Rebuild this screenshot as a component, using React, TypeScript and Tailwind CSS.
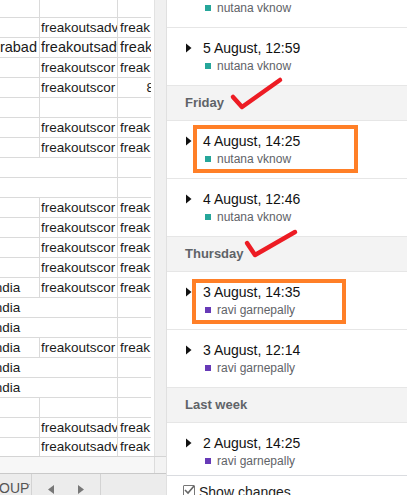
import React from "react";

type SheetRow = {
  a?: string;
  aRight?: boolean;
  b?: string;
  c?: string;
  cRight?: boolean;
  noA?: boolean;
  big?: boolean;
};

const sheetRows: SheetRow[] = [
  {},
  { b: "freakoutsadv", c: "freak" },
  { a: "Hyderabad", aRight: true, b: "freakoutsadv", c: "freak", big: true },
  { b: "freakoutscor", c: "freak" },
  { b: "freakoutscor", c: "8", cRight: true },
  {},
  { b: "freakoutscor", c: "freak" },
  { b: "freakoutscor", c: "freak" },
  { noA: true },
  { noA: true },
  { b: "freakoutscor", c: "freak" },
  { b: "freakoutscor", c: "freak" },
  { b: "freakoutscor", c: "freak" },
  { b: "freakoutscor", c: "freak" },
  { a: "India", b: "freakoutscor", c: "freak" },
  { a: "India", noA: true },
  { a: "India", noA: true },
  { a: "India", b: "freakoutscor", c: "freak" },
  { a: "India", noA: true },
  { a: "India", noA: true },
  {},
  { b: "freakoutsadv", c: "freak" },
  { b: "freakoutsadv", c: "freak" },
];

type Entry =
  | { kind: "item"; title: string; user: string; color: "teal" | "purple" }
  | { kind: "header"; label: string };

const entries: Entry[] = [
  { kind: "item", title: "5 August, 14:02", user: "nutana vknow", color: "teal" },
  { kind: "item", title: "5 August, 12:59", user: "nutana vknow", color: "teal" },
  { kind: "header", label: "Friday" },
  { kind: "item", title: "4 August, 14:25", user: "nutana vknow", color: "teal" },
  { kind: "item", title: "4 August, 12:46", user: "nutana vknow", color: "teal" },
  { kind: "header", label: "Thursday" },
  { kind: "item", title: "3 August, 14:35", user: "ravi garnepally", color: "purple" },
  { kind: "item", title: "3 August, 12:14", user: "ravi garnepally", color: "purple" },
  { kind: "header", label: "Last week" },
  { kind: "item", title: "2 August, 14:25", user: "ravi garnepally", color: "purple" },
];

function Sheet() {
  return (
    <div className="w-[151px] h-[456px] overflow-hidden font-['Liberation_Sans',Arial,sans-serif] text-[13.5px] text-[#1a1a1a]">
      {sheetRows.map((row, i) => {
        const first = i === 0;
        const last = i === sheetRows.length - 1;
        const h = first ? "h-[18px]" : last ? "h-[18px]" : "h-[20px]";
        return (
          <div
            key={i}
            className={`flex w-[156px] ${h} ${last ? "" : "border-b border-[#dadada]"} ${
              row.big ? "text-[14.5px]" : ""
            }`}
          >
            <div
              className={`w-[40px] shrink-0 overflow-hidden whitespace-nowrap flex items-center pt-[1px] ${
                row.noA ? "" : "border-r border-[#dadada]"
              } ${row.aRight ? "justify-end pr-[2px]" : ""}`}
            >
              {row.a && (
                <span className={row.aRight ? "" : "-ml-[9px]"}>{row.a}</span>
              )}
            </div>
            <div className="w-[78px] shrink-0 overflow-hidden whitespace-nowrap flex items-center pl-[1px] pt-[1px] border-r border-[#dadada]">
              {row.b}
            </div>
            <div
              className={`w-[38px] shrink-0 overflow-hidden whitespace-nowrap flex items-center pt-[1px] ${
                row.cRight ? "justify-end pr-[2px]" : "pl-[2px]"
              }`}
            >
              {row.c}
            </div>
          </div>
        );
      })}
    </div>
  );
}

function Triangle() {
  return (
    <svg width="6" height="10" viewBox="0 0 6 10" className="shrink-0">
      <path d="M0 0.5 L5.5 5 L0 9.5 Z" fill="#111" />
    </svg>
  );
}

function HistoryList() {
  return (
    <div className="h-[475px] overflow-hidden">
      <div className="-mt-[30px]">
        {entries.map((e, i) =>
          e.kind === "header" ? (
            <div
              key={i}
              className="h-[35px] border-b border-[#e6e6e6] bg-[#f3f3f3] flex items-center pl-[18px] text-[13px] font-bold text-[#5f6368]"
            >
              {e.label}
            </div>
          ) : (
            <div key={i} className="h-[58px] border-b border-[#e6e6e6] pt-[11px]">
              <div className="flex items-center h-[18px] pl-[19px]">
                <Triangle />
                <span className="ml-[11px] text-[14px] leading-[18px] text-[#111]">{e.title}</span>
              </div>
              <div className="flex items-center h-[16px] mt-[1px] pl-[38px]">
                <span
                  className={`w-[6px] h-[6px] shrink-0 ${
                    e.color === "teal" ? "bg-[#26a69a]" : "bg-[#673ab7]"
                  }`}
                />
                <span className="ml-[6px] text-[12px] leading-[16px] text-[#5f6368]">{e.user}</span>
              </div>
            </div>
          )
        )}
      </div>
    </div>
  );
}

function Annotations() {
  return (
    <svg
      width="407"
      height="495"
      viewBox="0 0 407 495"
      className="absolute inset-0 pointer-events-none"
    >
      <rect x="195" y="127" width="161" height="44" fill="none" stroke="#ff7f27" strokeWidth="4" />
      <rect x="194" y="281" width="150" height="41" fill="none" stroke="#ff7f27" strokeWidth="4" />
      <polyline
        points="233,97 242,107 280,80"
        fill="none"
        stroke="#ed1c24"
        strokeWidth="4.5"
        strokeLinejoin="round"
        strokeLinecap="round"
      />
      <polyline
        points="247,243 255,255 295,232"
        fill="none"
        stroke="#ed1c24"
        strokeWidth="4.5"
        strokeLinejoin="round"
        strokeLinecap="round"
      />
    </svg>
  );
}

export default function App() {
  return (
    <div className="relative w-[407px] h-[495px] overflow-hidden bg-white flex font-['Liberation_Sans',Arial,sans-serif]">
      {/* Spreadsheet side */}
      <div className="w-[166px] shrink-0 flex flex-col">
        <div className="flex h-[456px]">
          <Sheet />
          <div className="w-[3px]" />
          <div className="w-[12px] bg-[#f0f0f0] border-l border-[#e2e2e2]" />
        </div>
        <div className="h-[17px] flex border-t border-[#d4d4d4] bg-[#f7f7f7]">
          <div className="w-[154px]" />
          <div className="w-[12px] border-l border-[#dcdcdc] bg-[#f3f3f3]" />
        </div>
        <div className="h-[22px] flex border-t border-[#c9c9c9] bg-[#ececec]">
          <div className="w-[31px] flex items-start pt-[4px] text-[14px] text-[#555] relative">
            <span className="-ml-[1px]">OUP</span>
            <span className="absolute left-[28px] top-[10px] w-[2px] h-[1px] bg-[#aaa]" />
          </div>
          <div className="w-[69px] border-l border-[#d3d3d3] flex items-end pb-[1px]">
            <svg width="6" height="9" viewBox="0 0 6 9" className="ml-[16px]">
              <path d="M6 0 L0 4.5 L6 9 Z" fill="#777" />
            </svg>
            <svg width="6" height="9" viewBox="0 0 6 9" className="ml-[24px]">
              <path d="M0 0 L6 4.5 L0 9 Z" fill="#777" />
            </svg>
          </div>
          <div className="flex-1 border-l border-[#d3d3d3]" />
        </div>
      </div>

      {/* Version history panel */}
      <div className="w-[241px] shrink-0 border-l border-[#e0e0e0] flex flex-col">
        <HistoryList />
        <div className="h-[20px] border-t border-[#dadce0] flex items-start pl-[16px] pt-[9px]">
          <div className="w-[12px] h-[12px] border border-[#777] rounded-[1px] relative shrink-0">
            <svg width="12" height="12" viewBox="0 0 12 12" className="absolute -left-[1px] -top-[2px]">
              <path d="M2 6 L5 9 L11 2" fill="none" stroke="#666" strokeWidth="1.6" />
            </svg>
          </div>
          <span className="ml-[4px] text-[14px] leading-[14px] text-[#222]">Show changes</span>
        </div>
      </div>

      <Annotations />
    </div>
  );
}
